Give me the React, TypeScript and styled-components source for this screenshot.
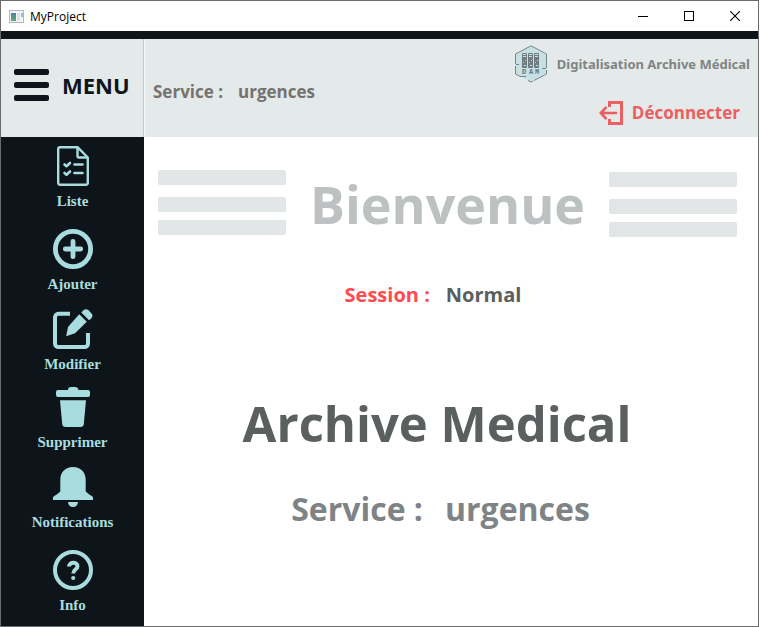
import React from "react";
import styled, { createGlobalStyle } from "styled-components";

const color = {
  ink: "#0d151a",
  panel: "#e4e9e9",
  aqua: "#a9dcdf",
  frame: "#6b6b6b",
};

const GlobalStyle = createGlobalStyle`
  *, *::before, *::after { box-sizing: border-box; }
  body {
    margin: 0;
    background: #ffffff;
    font-family: "Open Sans", "Noto Sans", sans-serif;
  }
  h1, h2, p { margin: 0; }
  button { font: inherit; padding: 0; border: 0; background: none; cursor: pointer; }
  svg { display: block; flex: none; }
`;

const Window = styled.div`
  display: flex;
  flex-direction: column;
  min-height: 100vh;
  border: 1px solid ${color.frame};
  margin-right: 1px;
`;

const TitleBar = styled.div`
  display: flex;
  align-items: center;
  height: 30px;
  padding-left: 8px;
  gap: 6px;
  font-size: 12px;
  color: #000000;
`;

const WindowButtons = styled.div`
  display: flex;
  margin-left: auto;
  height: 100%;
`;

const WindowButton = styled.button`
  display: flex;
  align-items: center;
  justify-content: center;
  width: 46px;
  height: 100%;
`;

const Strip = styled.div`
  height: 8px;
  background: ${color.ink};
`;

const Columns = styled.div`
  flex: 1;
  display: grid;
  grid-template-columns: 143px 1fr;
  grid-template-rows: 98px 1fr;
`;

const MenuButton = styled.button`
  display: flex;
  align-items: center;
  gap: 12px;
  padding: 0 0 6px 13px;
  background: ${color.panel};
  border-right: 1px solid #c4c8c8;
  color: ${color.ink};
  font-size: 22px;
  font-weight: 700;
`;

const MenuLabel = styled.span`
  font-family: "Noto Sans", sans-serif;
`;

const Header = styled.header`
  display: flex;
  justify-content: space-between;
  padding: 6px 8px 0 8px;
  background: ${color.panel};
  border-left: 1px solid #f6f8f8;
`;

const HeaderService = styled.p`
  display: flex;
  gap: 15px;
  margin-top: 35px;
  font-size: 17px;
  line-height: 24px;
  font-weight: 700;
  color: #767270;
`;

const HeaderSide = styled.div`
  display: flex;
  flex-direction: column;
  align-items: flex-end;
`;

const Brand = styled.div`
  display: flex;
  align-items: center;
  gap: 10px;
  font-family: "Noto Sans", sans-serif;
  font-size: 13px;
  line-height: 18px;
  font-weight: 700;
  color: #808483;
`;

const Logout = styled.button`
  display: flex;
  align-items: center;
  gap: 8px;
  margin: 17px 10px 0 0;
  font-size: 17px;
  line-height: 26px;
  font-weight: 700;
  color: #eb5f62;
`;

const Sidebar = styled.nav`
  display: grid;
  grid-template-rows: 83px 80px 78px 80px 83px auto;
  align-content: start;
  background: ${color.ink};
`;

const NavItem = styled.button`
  display: flex;
  flex-direction: column;
  align-items: center;
  gap: 6px;
  padding-top: 9px;
  color: ${color.aqua};
  font-family: "Liberation Serif", serif;
  font-size: 15px;
  line-height: 18px;
  font-weight: 700;
`;

const Main = styled.main`
  display: flex;
  flex-direction: column;
  background: #ffffff;
  font-weight: 700;
`;

const Welcome = styled.section`
  display: flex;
  justify-content: space-between;
  align-items: flex-start;
  padding: 33px 21px 0 14px;
`;

const Bars = styled.div<{ $drop: number }>`
  display: grid;
  grid-template-rows: 15px 12px 15px 8px 15px;
  width: 128px;
  margin-top: ${(p) => p.$drop}px;
`;

const Bar = styled.span<{ $row: number }>`
  grid-row: ${(p) => p.$row};
  border-radius: 2px;
  background: #e2e6e7;
`;

const WelcomeTitle = styled.h1`
  font-size: 52px;
  line-height: 68px;
  color: #bdc1c2;
`;

const SessionLine = styled.p`
  display: flex;
  justify-content: center;
  gap: 16px;
  margin-top: 43px;
  padding-right: 36px;
  font-size: 20px;
  line-height: 28px;
  color: #5b5f60;
`;

const SessionLabel = styled.span`
  color: #ff4b50;
`;

const ProjectTitle = styled.h2`
  margin-top: 79px;
  padding-right: 28px;
  text-align: center;
  font-size: 49px;
  line-height: 70px;
  color: #5b5f60;
`;

const ServiceLine = styled.p`
  display: flex;
  justify-content: center;
  gap: 22px;
  margin-top: 28px;
  padding-right: 21px;
  font-size: 32px;
  line-height: 46px;
  color: #7e8486;
`;

const AppIcon = () => (
  <svg width="15" height="13" viewBox="0 0 15 13" aria-hidden="true">
    <defs>
      <linearGradient id="pane" x1="0" y1="0" x2="0" y2="1">
        <stop offset="0" stopColor="#4c7fa3" />
        <stop offset="1" stopColor="#5fae7c" />
      </linearGradient>
    </defs>
    <rect x=".5" y=".5" width="14" height="12" fill="#f3f4f6" stroke="#b3b7bd" />
    <rect x="2" y="3" width="5" height="8" fill="url(#pane)" />
    <rect x="8" y="3" width="3" height="8" fill="#dfe3e6" />
    <rect x="12" y="3" width="2" height="4" fill="#8fc0c4" />
  </svg>
);

const BurgerIcon = () => (
  <svg width="36" height="32" viewBox="0 0 36 32" fill={color.ink} aria-hidden="true">
    <rect width="35" height="6" rx="2" />
    <rect y="13" width="35" height="6" rx="2" />
    <rect y="26" width="35" height="6" rx="2" />
  </svg>
);

const BrandLogo = () => (
  <svg width="32" height="38" viewBox="0 0 32 38" aria-hidden="true">
    <path d="M16 .8 31.300 9v20L16 37 .7 29V9z" fill="#c6e0e3" />
    <path
      d="M.5 19V9L16 .8 31.500 9v14M31.500 25v4L19 35.500M.5 21v8l5 2.600M1 19.500h3M27 23.500h4M5 31.500h6M13 35.500l3 1.500 2-1"
      fill="none"
      stroke="#75878a"
    />
    {[7, 13, 19].map((x) => (
      <g key={x}>
        <rect x={x} y="8" width="5" height="15" rx="1" fill="#6f7d80" />
        <path d={`M${x + 1} 9.500h3M${x + 1} 11.500h3M${x + 3} 15.500h1M${x + 1} 17.500h1M${x + 2} 20.500h2`} stroke="#c6e0e3" />
      </g>
    ))}
    <g fontFamily="Liberation Mono, monospace" fontSize="7" fontWeight="700" fill="#65777a" textAnchor="middle">
      <text x="9" y="29">D</text>
      <text x="16" y="29">A</text>
      <text x="22" y="29">M</text>
    </g>
  </svg>
);

const LogoutIcon = () => (
  <svg width="25" height="24" viewBox="0 0 25 24" fill="none" stroke="currentColor" strokeWidth="3" aria-hidden="true">
    <path d="M10.500 6V1.500h12v21h-12V18" />
    <path d="M18 12H2M7.500 6 1.800 12l5.700 6" strokeWidth="2.600" />
  </svg>
);

const ListIcon = () => (
  <svg width="40" height="40" viewBox="0 0 40 40" fill="none" stroke="currentColor" strokeLinecap="round" strokeLinejoin="round" aria-hidden="true">
    <path d="M7 1.200h17.500L34.800 11.500V37a1.800 1.800 0 0 1-1.800 1.800H7A1.800 1.800 0 0 1 5.200 37V3A1.800 1.800 0 0 1 7 1.200z" strokeWidth="2.400" />
    <path d="M24.500 2v8a1.500 1.500 0 0 0 1.500 1.500h8" strokeWidth="2.400" />
    <path d="M21.500 18.500h8M21.500 27h8M11.500 18.500l2 1.700 3.500-3.200M11.500 27l2 1.700 3.500-3.200" strokeWidth="2.600" />
  </svg>
);

const AddIcon = () => (
  <svg width="40" height="40" viewBox="0 0 40 40" fill="none" stroke="currentColor" strokeLinecap="round" aria-hidden="true">
    <circle cx="20" cy="20" r="17.600" strokeWidth="4.800" />
    <path d="M20 12.300v15.400M12.300 20h15.400" strokeWidth="4.800" />
  </svg>
);

const EditIcon = () => (
  <svg width="40" height="40" viewBox="0 0 40 40" aria-hidden="true">
    <path d="M17 4.800H5.500A3.500 3.500 0 0 0 2 8.300v26.200A3.500 3.500 0 0 0 5.500 38h26a3.500 3.500 0 0 0 3.500-3.500V24" fill="none" stroke="currentColor" strokeWidth="4" />
    <path d="M26.200 5.200 33.800 12.800 22 24.300 13.200 27.300 15 18z" fill="currentColor" />
    <path d="m28.300 3.500 2.200-2.200q2.500-2.200 5 0l2.800 2.900q2.400 2.500 0 5L36.100 11.300z" fill="currentColor" />
  </svg>
);

const TrashIcon = () => (
  <svg width="40" height="40" viewBox="0 0 40 40" fill="currentColor" aria-hidden="true">
    <path d="M15 3q0-3 3-3h4q3 0 3.500 3H35q2 0 2 2v3q0 2-2 2H5q-2 0-2-2V5q0-2 2-2z" />
    <path d="M7 13.300h26L30.800 37q-.3 3-3.300 3h-15q-3 0-3.300-3z" />
  </svg>
);

const BellIcon = () => (
  <svg width="40" height="40" viewBox="0 0 40 40" fill="currentColor" aria-hidden="true">
    <path d="M20 0C28 0 32.700 5.500 32.700 13v11.500q2 2 7.300 5.500v3H0v-3q5.300-3.500 7.300-5.500V13C7.300 5.500 12 0 20 0z" />
    <path d="M15 35h10q-.5 5-5 5t-5-5z" />
  </svg>
);

const InfoIcon = () => (
  <svg width="40" height="40" viewBox="0 0 40 40" fill="none" stroke="currentColor" aria-hidden="true">
    <circle cx="20" cy="20" r="18" strokeWidth="4" />
    <path d="M16 16.500c0-5 8.500-4.700 8.500-.3 0 3.300-4.200 3-4.200 7.300" strokeWidth="4" />
    <circle cx="20.200" cy="28" r="2.100" fill="currentColor" stroke="none" />
  </svg>
);

const navItems = [
  { label: "Liste", Icon: ListIcon },
  { label: "Ajouter", Icon: AddIcon },
  { label: "Modifier", Icon: EditIcon },
  { label: "Supprimer", Icon: TrashIcon },
  { label: "Notifications", Icon: BellIcon },
  { label: "Info", Icon: InfoIcon },
];

const BarStack = ({ drop }: { drop: number }) => (
  <Bars $drop={drop} aria-hidden="true">
    <Bar $row={1} />
    <Bar $row={3} />
    <Bar $row={5} />
  </Bars>
);

export default function App() {
  return (
    <>
      <GlobalStyle />
      <Window>
        <TitleBar>
          <AppIcon />
          <span>MyProject</span>
          <WindowButtons>
            <WindowButton type="button" aria-label="Réduire">
              <svg width="10" height="10" viewBox="0 0 10 10" stroke="#000">
                <path d="M0 5.500h10" />
              </svg>
            </WindowButton>
            <WindowButton type="button" aria-label="Agrandir">
              <svg width="10" height="10" viewBox="0 0 10 10" stroke="#000" fill="none">
                <rect x=".5" y=".5" width="9" height="9" />
              </svg>
            </WindowButton>
            <WindowButton type="button" aria-label="Fermer">
              <svg width="10" height="10" viewBox="0 0 10 10" stroke="#000" strokeWidth="1.100">
                <path d="m0 0 10 10M10 0 0 10" />
              </svg>
            </WindowButton>
          </WindowButtons>
        </TitleBar>
        <Strip />
        <Columns>
          <MenuButton type="button">
            <BurgerIcon />
            <MenuLabel>MENU</MenuLabel>
          </MenuButton>
          <Header>
            <HeaderService>
              <span>Service :</span>
              <span>urgences</span>
            </HeaderService>
            <HeaderSide>
              <Brand>
                <BrandLogo />
                <span>Digitalisation Archive Médical</span>
              </Brand>
              <Logout type="button">
                <LogoutIcon />
                <span>Déconnecter</span>
              </Logout>
            </HeaderSide>
          </Header>
          <Sidebar>
            {navItems.map(({ label, Icon }) => (
              <NavItem key={label} type="button">
                <Icon />
                <span>{label}</span>
              </NavItem>
            ))}
          </Sidebar>
          <Main>
            <Welcome>
              <BarStack drop={0} />
              <WelcomeTitle>Bienvenue</WelcomeTitle>
              <BarStack drop={2} />
            </Welcome>
            <SessionLine>
              <SessionLabel>Session :</SessionLabel>
              <span>Normal</span>
            </SessionLine>
            <ProjectTitle>Archive Medical</ProjectTitle>
            <ServiceLine>
              <span>Service :</span>
              <span>urgences</span>
            </ServiceLine>
          </Main>
        </Columns>
      </Window>
    </>
  );
}
